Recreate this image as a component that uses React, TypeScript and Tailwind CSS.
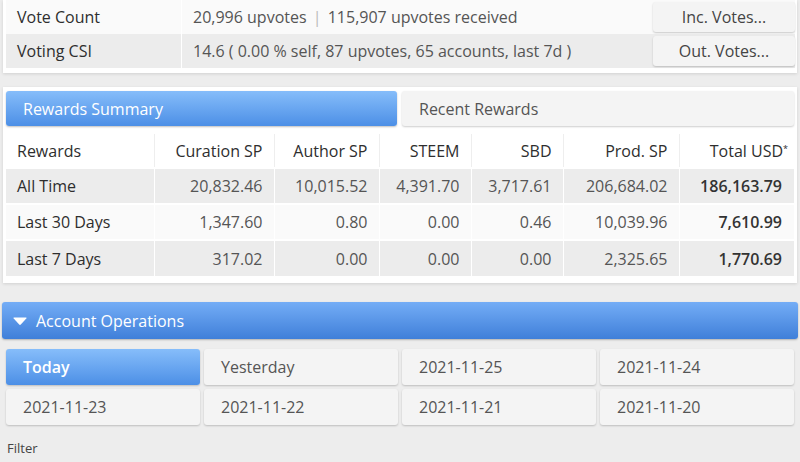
import type { ReactNode } from "react";

const font = { fontFamily: '"Open Sans", "Liberation Sans", sans-serif' };

const rows = [
  { label: "All Time", cells: ["20,832.46", "10,015.52", "4,391.70", "3,717.61", "206,684.02"], total: "186,163.79" },
  { label: "Last 30 Days", cells: ["1,347.60", "0.80", "0.00", "0.46", "10,039.96"], total: "7,610.99" },
  { label: "Last 7 Days", cells: ["317.02", "0.00", "0.00", "0.00", "2,325.65"], total: "1,770.69" },
];

const days = ["Today", "Yesterday", "2021-11-25", "2021-11-24", "2021-11-23", "2021-11-22", "2021-11-21", "2021-11-20"];

function InfoRow({ label, value, button, shaded }: { label: string; value: ReactNode; button: string; shaded?: boolean }) {
  return (
    <div className={`flex h-[34px] items-center ${shaded ? "bg-[#ececec]" : "bg-[#fafafa]"}`}>
      <div className="flex h-full w-[176px] items-center border-r border-white pl-[11px] text-[16px] text-[#2e2e2e]">{label}</div>
      <div className="flex-1 pl-[11px] text-[16px] text-[#555]">{value}</div>
      <button className="h-[30px] w-[142px] rounded-[3px] bg-[#f4f4f4] text-[16px] text-[#444] shadow-[0_1px_2px_rgba(0,0,0,0.2)]">
        {button}
      </button>
    </div>
  );
}

export default function App() {
  return (
    <div className="h-[462px] w-[800px] overflow-hidden bg-[#ededed]" style={font}>
      <div className="mx-[3px] bg-white pl-[3px] pr-[2px] pb-[5px] shadow-[0_1px_3px_rgba(0,0,0,0.12)]">
        <InfoRow
          label="Vote Count"
          value={
            <>
              20,996 upvotes <span className="mx-[2px] text-[#bbb]">|</span> 115,907 upvotes received
            </>
          }
          button="Inc. Votes..."
        />
        <InfoRow label="Voting CSI" value="14.6 ( 0.00 % self, 87 upvotes, 65 accounts, last 7d )" button="Out. Votes..." shaded />
      </div>

      <div className="mx-[3px] mt-[14px] bg-white px-[3px] pt-[4px] pb-[7px] shadow-[0_1px_3px_rgba(0,0,0,0.12)]">
        <div className="flex gap-[5px]">
          <div className="flex h-[35px] w-[391px] items-center rounded-[3px] bg-gradient-to-b from-[#86bdfa] to-[#4c8fe6] pl-[17px] text-[16px] text-white shadow-[0_1px_2px_rgba(0,0,0,0.25)]">
            Rewards Summary
          </div>
          <div className="flex h-[35px] flex-1 items-center rounded-[3px] bg-[#f4f4f4] pl-[17px] text-[16px] text-[#555] shadow-[0_1px_2px_rgba(0,0,0,0.2)]">
            Recent Rewards
          </div>
        </div>

        <table className="mt-[8px] w-full border-collapse text-[16px]">
          <colgroup>
            <col className="w-[148px]" />
            <col className="w-[120px]" />
            <col className="w-[105px]" />
            <col className="w-[92px]" />
            <col className="w-[92px]" />
            <col className="w-[116px]" />
            <col />
          </colgroup>
          <thead>
            <tr className="h-[34px] border-b border-[#ddd] text-[#2e2e2e]">
              <th className="pl-[11px] text-left font-normal">Rewards</th>
              {["Curation SP", "Author SP", "STEEM", "SBD", "Prod. SP"].map((h) => (
                <th key={h} className="border-l border-[#eee] pr-[11px] text-right font-normal">
                  {h}
                </th>
              ))}
              <th className="border-l border-[#eee] pr-[6px] text-right font-normal">
                Total USD<sup className="text-[9px]">*</sup>
              </th>
            </tr>
          </thead>
          <tbody>
            {rows.map((r, i) => (
              <tr key={r.label} className={`h-[36px] border-t-2 border-white ${i % 2 === 0 ? "bg-[#ececec]" : "bg-[#fafafa]"}`}>
                <td className="pl-[11px] text-[#2e2e2e]">{r.label}</td>
                {r.cells.map((c, j) => (
                  <td key={j} className="border-l border-white pr-[11px] text-right text-[#555]">
                    {c}
                  </td>
                ))}
                <td className="border-l border-white pr-[12px] text-right font-semibold text-[#333]">{r.total}</td>
              </tr>
            ))}
          </tbody>
        </table>
      </div>

      <div className="mx-[2px] mt-[19px] flex h-[37px] items-center rounded-[3px] bg-gradient-to-b from-[#74adf6] to-[#3f7fd9] pl-[10px] text-[16px] text-white shadow-[0_1px_2px_rgba(0,0,0,0.25)]">
        <svg width="16" height="10" viewBox="0 0 16 10" className="mr-[8px]">
          <path d="M2 1.5 H14 Q15 1.5 14.3 2.4 L8.8 8.5 Q8 9.3 7.2 8.5 L1.7 2.4 Q1 1.5 2 1.5 Z" fill="white" />
        </svg>
        Account Operations
      </div>

      <div className="mx-[6px] mt-[10px] grid grid-cols-4 gap-x-[4px] gap-y-[4px]">
        {days.map((d, i) => (
          <div
            key={d}
            className={`flex h-[36px] items-center rounded-[3px] pl-[17px] text-[16px] shadow-[0_1px_2px_rgba(0,0,0,0.2)] ${
              i === 0 ? "bg-gradient-to-b from-[#86bdfa] to-[#4c8fe6] text-white font-semibold" : "bg-[#f4f4f4] text-[#555]"
            }`}
          >
            {d}
          </div>
        ))}
      </div>

      <div className="mt-[14px] pl-[7px] text-[13px] text-[#444]">Filter</div>
    </div>
  );
}
